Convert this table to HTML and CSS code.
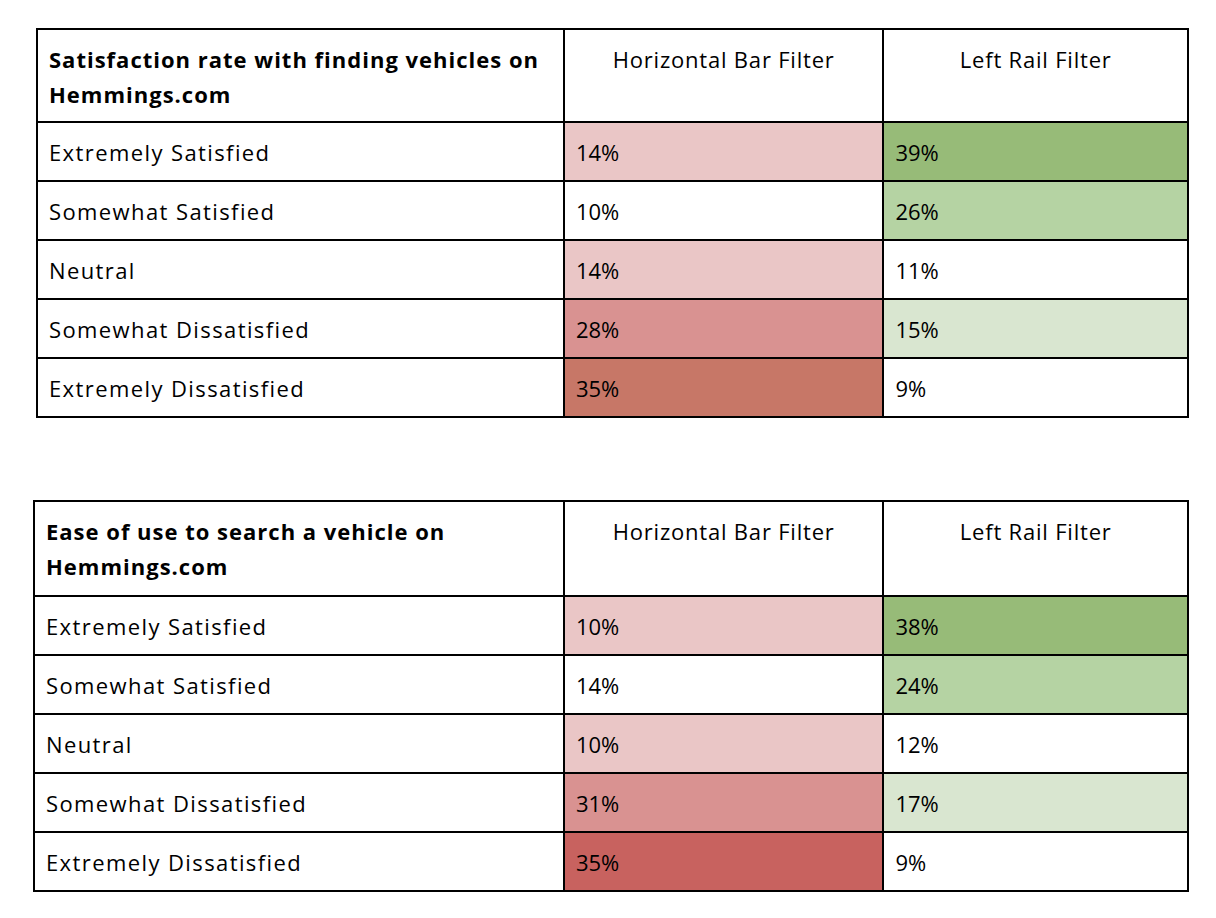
FILE: index.html
```html
<!DOCTYPE html>
<html>
<head>
<meta charset="utf-8">
<link rel="stylesheet" href="styles.css">
</head>
<body>
<div class="page">
  <table class="grid grid-one">
    <tr class="head">
      <td class="title"><b>Satisfaction rate with finding vehicles on Hemmings.com</b></td>
      <td class="colhead">Horizontal Bar Filter</td>
      <td class="colhead">Left Rail Filter</td>
    </tr>
    <tr><td class="label">Extremely Satisfied</td><td class="num r1">14%</td><td class="num g3">39%</td></tr>
    <tr><td class="label">Somewhat Satisfied</td><td class="num">10%</td><td class="num g2">26%</td></tr>
    <tr><td class="label">Neutral</td><td class="num r1">14%</td><td class="num">11%</td></tr>
    <tr><td class="label">Somewhat Dissatisfied</td><td class="num r2">28%</td><td class="num g1">15%</td></tr>
    <tr><td class="label">Extremely Dissatisfied</td><td class="num r3a">35%</td><td class="num">9%</td></tr>
  </table>

  <table class="grid grid-two">
    <tr class="head">
      <td class="title"><b>Ease of use to search a vehicle on Hemmings.com</b></td>
      <td class="colhead">Horizontal Bar Filter</td>
      <td class="colhead">Left Rail Filter</td>
    </tr>
    <tr><td class="label">Extremely Satisfied</td><td class="num r1">10%</td><td class="num g3">38%</td></tr>
    <tr><td class="label">Somewhat Satisfied</td><td class="num">14%</td><td class="num g2">24%</td></tr>
    <tr><td class="label">Neutral</td><td class="num r1">10%</td><td class="num">12%</td></tr>
    <tr><td class="label">Somewhat Dissatisfied</td><td class="num r2">31%</td><td class="num g1">17%</td></tr>
    <tr><td class="label">Extremely Dissatisfied</td><td class="num r3b">35%</td><td class="num">9%</td></tr>
  </table>
</div>
</body>
</html>
```

FILE: styles.css
```css
html, body {
  margin: 0;
  padding: 0;
  background: #ffffff;
}

.page {
  padding-top: 28px;
  font-family: "Open Sans", "Liberation Sans", sans-serif;
  font-size: 22px;
  letter-spacing: 0.8px;
  color: #000;
}

.grid {
  border-collapse: separate;
  border-spacing: 0;
  border-top: 2px solid #000;
  border-left: 2px solid #000;
  table-layout: fixed;
}

.grid-one {
  margin-left: 36px;
  width: 1153px;
}

.grid-two {
  margin-top: 82px;
  margin-left: 33px;
  width: 1156px;
}

.grid td {
  box-sizing: border-box;
  border-right: 2px solid #000;
  border-bottom: 2px solid #000;
  padding: 12px 11px 10px 11px;
  line-height: 35px;
  vertical-align: middle;
  text-align: left;
  white-space: nowrap;
  overflow: hidden;
}

.grid-one td:nth-child(1) { width: 526px; }
.grid-two td:nth-child(1) { width: 529px; }
.grid td:nth-child(2) { width: 319px; }
.grid td:nth-child(3) { width: 304px; }

.grid .head td {
  vertical-align: top;
  padding-top: 12px;
  padding-bottom: 9px;
}

.grid-two .head td {
  padding-bottom: 11px;
}

.grid .head td.title {
  white-space: normal;
}

.grid .head b {
  font-weight: 700;
  letter-spacing: 1px;
}

.grid td.label {
  letter-spacing: 1.4px;
}

.grid td.colhead {
  text-align: center;
}

.grid td.num {
  letter-spacing: 0;
}

.r1 { background: #eac6c6; }
.r2 { background: #d99291; }
.r3a { background: #c77767; }
.r3b { background: #c8625f; }
.g1 { background: #d9e6d0; }
.g2 { background: #b5d3a3; }
.g3 { background: #97bb78; }
```
